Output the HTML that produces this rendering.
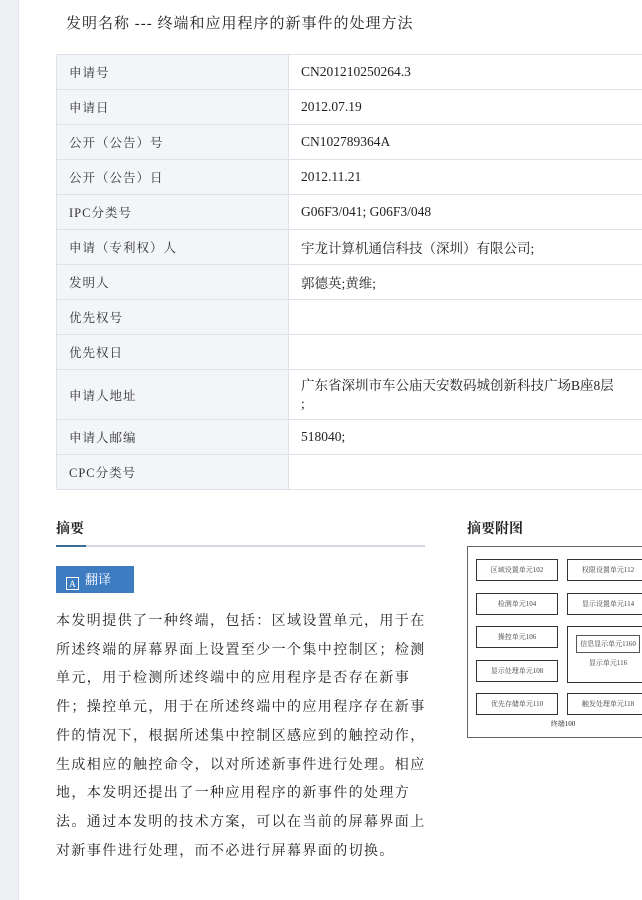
<!DOCTYPE html>
<html><head><meta charset="utf-8"><style>
body{margin:0;width:642px;height:900px;overflow:hidden;background:#fff;font-family:"Liberation Serif","Noto Serif CJK SC",serif;color:#222;position:relative}
.strip{position:absolute;left:0;top:0;width:18px;height:900px;background:#eef0f3;border-right:1px solid #e2e5ea}
.title{position:absolute;left:66px;top:12px;font-size:15px;letter-spacing:1px}
table{position:absolute;left:56px;top:54px;border-collapse:collapse;width:620px}
td{border:1px solid #dde2e8;font-size:13.5px;padding:0 0 0 12px;height:34px}
td.l{width:219px;background:#f3f5f8;color:#333;font-size:12.5px;letter-spacing:1px}
td.v{color:#222}
.h{position:absolute;font-weight:bold;font-size:14px}
.line{position:absolute;left:56px;top:545px;width:369px;height:2px;background:#d3d8df}
.line b{display:block;width:30px;height:2px;background:#3a6a96}
.btn{position:absolute;left:56px;top:566px;width:78px;height:27px;background:#3d7cc1;color:#fff;font-size:13px;line-height:27px}
.abs{position:absolute;left:56px;top:608px;font-size:14px;letter-spacing:1.4px;line-height:28.7px;white-space:nowrap}
.fig{position:absolute;left:467px;top:546px;width:190px;height:190px;border:1px solid #666}
.b{position:absolute;border:1px solid #333;font-size:7px;text-align:center;color:#444;line-height:20px;height:20px;width:80px}
</style></head><body>
<div class="strip"></div>
<div class="title">发明名称 --- 终端和应用程序的新事件的处理方法</div>
<table>
<tr><td class="l">申请号</td><td class="v">CN201210250264.3</td></tr>
<tr><td class="l">申请日</td><td class="v">2012.07.19</td></tr>
<tr><td class="l">公开（公告）号</td><td class="v">CN102789364A</td></tr>
<tr><td class="l">公开（公告）日</td><td class="v">2012.11.21</td></tr>
<tr><td class="l">IPC分类号</td><td class="v">G06F3/041; G06F3/048</td></tr>
<tr><td class="l">申请（专利权）人</td><td class="v">宇龙计算机通信科技（深圳）有限公司;</td></tr>
<tr><td class="l">发明人</td><td class="v">郭德英;黄维;</td></tr>
<tr><td class="l">优先权号</td><td class="v"></td></tr>
<tr><td class="l">优先权日</td><td class="v"></td></tr>
<tr><td class="l" style="height:49px">申请人地址</td><td class="v" style="white-space:nowrap;line-height:18px">广东省深圳市车公庙天安数码城创新科技广场B座8层<br>;</td></tr>
<tr><td class="l">申请人邮编</td><td class="v">518040;</td></tr>
<tr><td class="l">CPC分类号</td><td class="v"></td></tr>
</table>
<div class="h" style="left:56px;top:518px">摘要</div>
<div class="line"><b></b></div>
<div class="btn"><span style="display:inline-block;width:13px;height:13px;border:1.5px solid #fff;margin:0 6px 0 10px;vertical-align:-3px;font-size:9px;line-height:12px;text-align:center;box-sizing:border-box">A</span>翻译</div>
<div class="abs">本发明提供了一种终端，包括：区域设置单元，用于在<br>所述终端的屏幕界面上设置至少一个集中控制区；检测<br>单元，用于检测所述终端中的应用程序是否存在新事<br>件；操控单元，用于在所述终端中的应用程序存在新事<br>件的情况下，根据所述集中控制区感应到的触控动作，<br>生成相应的触控命令，以对所述新事件进行处理。相应<br>地，本发明还提出了一种应用程序的新事件的处理方<br>法。通过本发明的技术方案，可以在当前的屏幕界面上<br>对新事件进行处理，而不必进行屏幕界面的切换。</div>
<div class="h" style="left:467px;top:518px">摘要附图</div>
<div class="fig">
<div class="b" style="left:8px;top:12px">区域设置单元102</div>
<div class="b" style="left:99px;top:12px">权限设置单元112</div>
<div class="b" style="left:8px;top:46px">检测单元104</div>
<div class="b" style="left:99px;top:46px">显示设置单元114</div>
<div class="b" style="left:8px;top:79px">操控单元106</div>
<div class="b" style="left:99px;top:79px;height:55px"><div style="border:1px solid #555;margin:8px 8px 0;line-height:16px">信息显示单元1160</div>显示单元116</div>
<div class="b" style="left:8px;top:113px">显示处理单元108</div>
<div class="b" style="left:8px;top:146px">优先存储单元110</div>
<div class="b" style="left:99px;top:146px">触发处理单元118</div>
<div style="position:absolute;left:0;width:100%;top:172px;text-align:center;font-size:7px">终端100</div>
</div>
</body></html>
